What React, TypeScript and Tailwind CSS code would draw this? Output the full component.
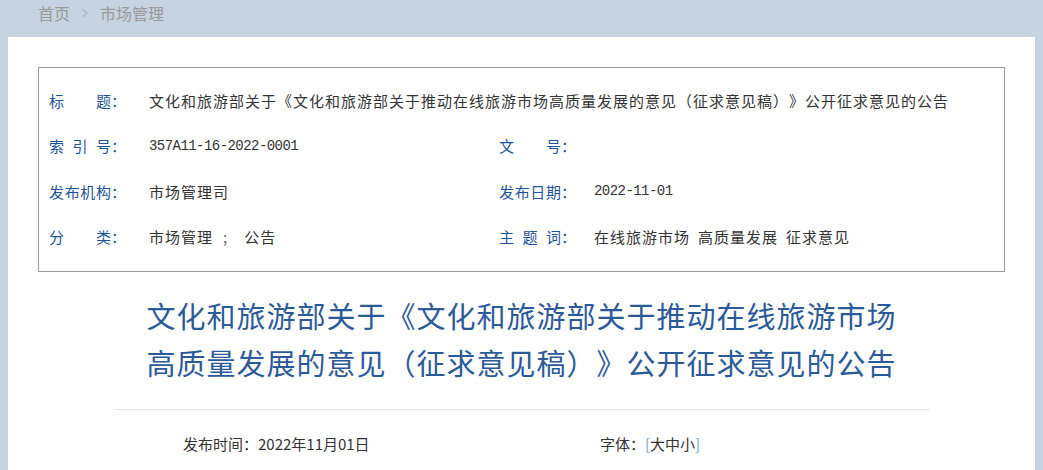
const cjk = "font-['Noto_Sans_CJK_SC','Noto_Sans',sans-serif] [text-spacing-trim:space-all]";
const mono = "font-['Liberation_Mono',monospace] text-[14px] tracking-[-0.55px]";

function Label({ text, w }: { text: string, w: string }) {
    return (
        <span className={`${w} shrink-0 flex whitespace-nowrap tracking-normal text-[#1d5499]`}>
            <span className="w-[62px] inline-block [text-align-last:justify]">{text}</span>
            <span>：</span>
        </span>
    );
}

function Row({ children }: { children: any }) {
    return <div className="h-[45.5px] flex items-center whitespace-nowrap">{children}</div>;
}

export default function App() {
    return (
        <div className={`w-[1043px] h-[470px] overflow-hidden bg-[#c8d3e1] ${cjk}`}>
            <div className="h-[25px] pl-[38px] flex items-center text-[16px] text-[#999]">
                <span>首页</span>
                <svg width="8" height="10" viewBox="0 0 8 10" className="mx-[11px]">
                    <path d="M1.5 1 L6 5 L1.5 9" fill="none" stroke="#b5b5b5" strokeWidth="1.2" />
                </svg>
                <span>市场管理</span>
            </div>
            <div className="mx-[8px] mt-[12px] bg-white h-[440px] pt-[30px]">
                <div className="mx-[30px] border border-[#9a9a9a] pl-[10px] pt-[10px] pb-[11px] text-[15px] tracking-[1px] text-[#333]">
                    <Row>
                        <Label text="标题" w="w-[100px]" />
                        <span>文化和旅游部关于《文化和旅游部关于推动在线旅游市场高质量发展的意见（征求意见稿）》公开征求意见的公告</span>
                    </Row>
                    <Row>
                        <div className="w-[450px] flex items-center">
                            <Label text="索引号" w="w-[100px]" />
                            <span className={mono}>357A11-16-2022-0001</span>
                        </div>
                        <Label text="文号" w="w-[95px]" />
                    </Row>
                    <Row>
                        <div className="w-[450px] flex items-center">
                            <Label text="发布机构" w="w-[100px]" />
                            <span>市场管理司</span>
                        </div>
                        <Label text="发布日期" w="w-[95px]" />
                        <span className={mono}>2022-11-01</span>
                    </Row>
                    <Row>
                        <div className="w-[450px] flex items-center">
                            <Label text="分类" w="w-[100px]" />
                            <span>市场管理</span>
                            <span className="ml-[10px] text-[#666]">;</span>
                            <span className="ml-[16px]">公告</span>
                        </div>
                        <Label text="主题词" w="w-[95px]" />
                        <span>在线旅游市场</span>
                        <span className="ml-[8px]">高质量发展</span>
                        <span className="ml-[8px]">征求意见</span>
                    </Row>
                </div>
                <h1 className="w-[760px] mx-auto mt-[20px] text-center text-[29px] leading-[47px] tracking-[1px] text-[#2b5a9b]">
                    文化和旅游部关于《文化和旅游部关于推动在线旅游市场高质量发展的意见（征求意见稿）》公开征求意见的公告
                </h1>
                <div className="w-[816px] mx-auto mt-[23px] border-t border-[#e8e8e8]"></div>
                <div className="flex items-center mt-[23px] text-[15px] text-[#333]">
                    <span className="ml-[175px] w-[417px]">发布时间：2022年11月01日</span>
                    <span>字体：<span className="text-[#7aa6d8]">[</span>大中小<span className="text-[#7aa6d8]">]</span></span>
                </div>
            </div>
        </div>
    );
}
